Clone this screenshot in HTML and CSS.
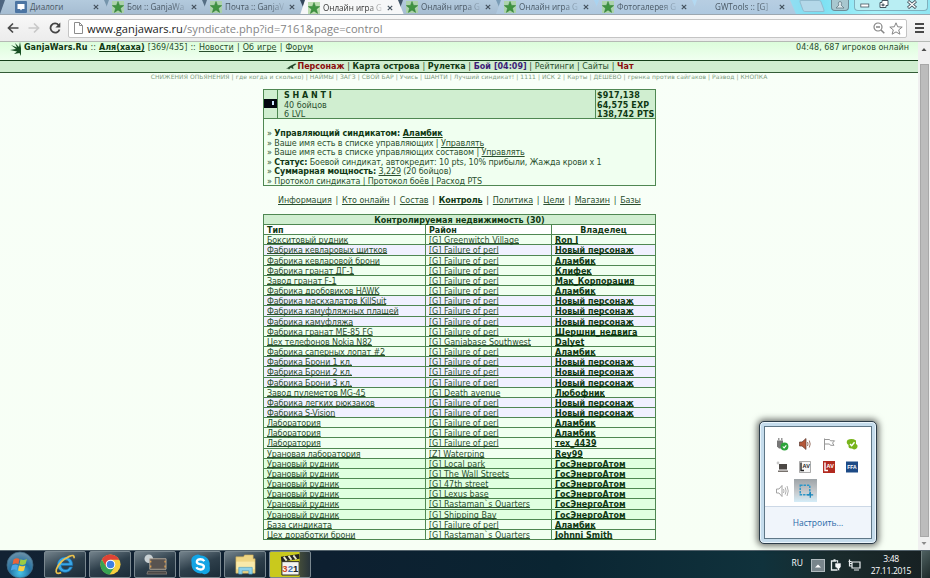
FILE: index.html
```html
<!DOCTYPE html>
<html lang="ru">
<head>
    <meta charset="UTF-8">
    <title>Онлайн игра GanjaWars.Ru</title>
    <link rel="stylesheet" href="styles.css">
</head>
<body>
    <svg class="defs" width="0" height="0">
        <symbol id="star" viewBox="0 0 12 12"><rect width="12" height="12" fill="#a9d59a" opacity=".75"/><path d="M6 .5 7.5 4.4 11.7 4.6 8.4 7.2 9.6 11.4 6 9 2.4 11.4 3.6 7.2 .3 4.6 4.5 4.4Z" fill="#3f9440" stroke="#2e7a35" stroke-width=".5"/></symbol>
        <symbol id="close" viewBox="0 0 6 6"><path d="M.8.8 5.2 5.2M5.2.8.8 5.2" stroke="#46535f" stroke-width="1.2"/></symbol>
    </svg>

    <div class="tabs">
        <div class="tab first"><svg class="fav" viewBox="0 0 12 12"><rect width="12" height="12" rx="1" fill="#4c75a3"/><path d="M2.5 3h7v5H7L6 9.5 5 8H2.5Z" fill="#fff"/></svg><span>Диалоги</span><svg class="x"><use href="#close"/></svg></div>
        <div class="tab"><svg class="fav"><use href="#star"/></svg><span>Бои :: GanjaWa</span><svg class="x"><use href="#close"/></svg></div>
        <div class="tab"><svg class="fav"><use href="#star"/></svg><span>Почта :: GanjaV</span><svg class="x"><use href="#close"/></svg></div>
        <div class="tab active"><svg class="fav"><use href="#star"/></svg><span>Онлайн игра G</span><svg class="x"><use href="#close"/></svg></div>
        <div class="tab"><svg class="fav"><use href="#star"/></svg><span>Онлайн игра G</span><svg class="x"><use href="#close"/></svg></div>
        <div class="tab"><svg class="fav"><use href="#star"/></svg><span>Онлайн игра G</span><svg class="x"><use href="#close"/></svg></div>
        <div class="tab"><svg class="fav"><use href="#star"/></svg><span>Фотогалерея G</span><svg class="x"><use href="#close"/></svg></div>
        <div class="tab"><i class="fav"></i><span>GWTools :: [G]</span><svg class="x"><use href="#close"/></svg></div>
        <div class="newtab"></div>
        <div class="user"><svg width="10" height="8" viewBox="0 0 10 8"><path d="M5 .5a2 2 0 0 1 1 3.5L9 7H1l3-3A2 2 0 0 1 5 .5Z" fill="#dce8ec" stroke="#59707a" stroke-width=".7"/></svg></div>
        <div class="wincontrols">
            <svg width="10" height="9" viewBox="0 0 10 9"><rect x=".8" y="4" width="8" height="3" fill="#fff" stroke="#45545f" stroke-width=".8"/></svg>
            <svg width="10" height="9" viewBox="0 0 10 9"><path d="M3 .5h6v5H7v2H1v-5h2Z" fill="#fff" stroke="#45545f"/><path d="M3 4.2h2v1.5H3Z" fill="none" stroke="#45545f"/></svg>
            <svg class="winclose" width="10" height="9" viewBox="0 0 10 9"><path d="m1 1 8 7M9 1 1 8" stroke="#45545f" stroke-width="3"/><path d="m1.5 1.4 7 6.2M8.5 1.4l-7 6.2" stroke="#fff" stroke-width="1.4"/></svg>
        </div>
    </div>

    <div class="toolbar">
        <svg class="back" width="12" height="12" viewBox="0 0 12 12"><path d="M11.5 6H2M6 1.5 1.5 6 6 10.5" fill="none" stroke="#4a4a4a" stroke-width="1.7"/></svg>
        <svg class="forward" width="12" height="12" viewBox="0 0 12 12"><path d="M.5 6H10M6 1.5 10.5 6 6 10.5" fill="none" stroke="#c9c9c9" stroke-width="1.7"/></svg>
        <svg class="reload" width="12" height="12" viewBox="0 0 12 12"><path d="M9.6 3A4.6 4.6 0 1 0 10.5 7.5" fill="none" stroke="#444" stroke-width="1.8"/><path d="M11.3.4v5H6.4Z" fill="#444"/></svg>
        <div class="address">
            <svg class="page-icon" width="9" height="12" viewBox="0 0 9 12"><path d="M.5.5h5l3 3v8h-8ZM5.5.5v3h3" fill="#fff" stroke="#8c8c8c"/></svg>
            <span class="url"><b>www.ganjawars.ru</b>/syndicate.php?id=7161&amp;page=control</span>
            <svg width="12" height="12" viewBox="0 0 12 12"><circle cx="5" cy="5" r="4" fill="none" stroke="#858585" stroke-width="1.2"/><path d="M3 5h4M8 8l3.3 3.3" stroke="#858585" stroke-width="1.5"/></svg>
            <svg width="14" height="13" viewBox="0 0 14 13"><path d="m7 .8 1.7 4 4.5.3-3.5 2.8 1.2 4.3L7 9.9l-3.9 2.3 1.2-4.3L.8 5.1l4.5-.3Z" fill="#fff" stroke="#858585"/></svg>
        </div>
        <div class="burger"><i></i><i></i><i></i></div>
    </div>

    <div class="view">
        <div class="page">
            <div class="top">
                <svg class="leaf" width="12" height="15" viewBox="0 0 12 15"><path d="M10 0 11 6 11 14 9.5 11 4 12 7 9.5 0 8 6 7 1 3 7 5.5 5 1 9 5Z" fill="#174f22"/></svg>
                <span class="sitename"><b>GanjaWars.Ru</b> :: <b><a>Аля(хаха)</a></b> [369/435] :: <a>Новости</a> | <a>Об игре</a> | <a>Форум</a></span>
                <span class="online">04:48, 687 игроков онлайн</span>
            </div>
            <div class="menu">
                <svg width="11" height="8" viewBox="0 0 11 8"><path d="M0 6 4 3 9 .5 10.5 1 7 3.5 7.5 6 6 5.5 5 4.5 3 6.5 2 5.5Z" fill="#24482a"/></svg>
                <span><b class="red">Персонаж</b> | <b>Карта острова</b> | <b>Рулетка</b> | <b class="violet">Бой [04:09]</b> | Рейтинги | Сайты | <b class="red">Чат</b></span>
            </div>
            <div class="quick"><span>СНИЖЕНИЯ ОПЬЯНЕНИЯ | где когда и сколько) | НАЙМЫ | ЗАГЗ | СВОЙ БАР | Учись | ШАНТИ | Лучший синдикат! | 1111 | ИСК 2 | Карты | ДЕШЕВО | гренка против сайгаков | Развод | КНОПКА</span></div>

            <div class="synd">
                <div class="synd-head">
                    <div class="sign"><i></i></div>
                    <div class="name"><b>S H A N T I</b><br>40 бойцов<br>6 LVL</div>
                    <div class="score">$917,138<br>64,575 EXP<br>138,742 PTS</div>
                </div>
                <div class="synd-info">
                    <div>» <b>Управляющий синдикатом: <a>Аламбик</a></b></div>
                    <div>» Ваше имя есть в списке управляющих | <a>Управлять</a></div>
                    <div>» Ваше имя есть в списке управляющих составом | <a>Управлять</a></div>
                    <div>» <b>Статус:</b> Боевой синдикат, автокредит: 10 pts, 10% прибыли, Жажда крови x 1</div>
                    <div>» <b>Суммарная мощность:</b> <a>3,229</a> (20 бойцов)</div>
                    <div>» Протокол синдиката | Протокол боёв | Расход PTS</div>
                </div>
            </div>

            <div class="sections">
                <a>Информация</a><i>|</i><a>Кто онлайн</a><i>|</i><a>Состав</a><i>|</i><a><b>Контроль</b></a><i>|</i><a>Политика</a><i>|</i><a>Цели</a><i>|</i><a>Магазин</a><i>|</i><a>Базы</a>
            </div>

            <div class="estate">
                <div class="caption">Контролируемая недвижимость (30)</div>
                <div class="row head"><b>Тип</b><b>Район</b><b>Владелец</b></div>
                <div class="row"><a>Бокситовый рудник</a><a>[G] Greenwitch Village</a><a>Ron I</a></div>
                <div class="row own"><a>Фабрика кевларовых щитков</a><a>[G] Failure of perl</a><a>Новый персонаж</a></div>
                <div class="row"><a>Фабрика кевларовой брони</a><a>[G] Failure of perl</a><a>Аламбик</a></div>
                <div class="row"><a>Фабрика гранат ДГ-1</a><a>[G] Failure of perl</a><a>Клифек</a></div>
                <div class="row"><a>Завод гранат F-1</a><a>[G] Failure of perl</a><a>Мак_Корпорация</a></div>
                <div class="row"><a>Фабрика дробовиков HAWK</a><a>[G] Failure of perl</a><a>Аламбик</a></div>
                <div class="row own"><a>Фабрика маскхалатов KillSuit</a><a>[G] Failure of perl</a><a>Новый персонаж</a></div>
                <div class="row own"><a>Фабрика камуфляжных плащей</a><a>[G] Failure of perl</a><a>Новый персонаж</a></div>
                <div class="row own"><a>Фабрика камуфляжа</a><a>[G] Failure of perl</a><a>Новый персонаж</a></div>
                <div class="row"><a>Фабрика гранат МЕ-85 FG</a><a>[G] Failure of perl</a><a>Шершни_недвига</a></div>
                <div class="row"><a>Цех телефонов Nokia N82</a><a>[G] Ganjabase Southwest</a><a>Dalyet</a></div>
                <div class="row"><a>Фабрика саперных лопат #2</a><a>[G] Failure of perl</a><a>Аламбик</a></div>
                <div class="row own"><a>Фабрика Брони 1 кл.</a><a>[G] Failure of perl</a><a>Новый персонаж</a></div>
                <div class="row own"><a>Фабрика Брони 2 кл.</a><a>[G] Failure of perl</a><a>Новый персонаж</a></div>
                <div class="row own"><a>Фабрика Брони 3 кл.</a><a>[G] Failure of perl</a><a>Новый персонаж</a></div>
                <div class="row"><a>Завод пулеметов MG-45</a><a>[G] Death avenue</a><a>Любофник</a></div>
                <div class="row own"><a>Фабрика легких рюкзаков</a><a>[G] Failure of perl</a><a>Новый персонаж</a></div>
                <div class="row own"><a>Фабрика S-Vision</a><a>[G] Failure of perl</a><a>Новый персонаж</a></div>
                <div class="row"><a>Лаборатория</a><a>[G] Failure of perl</a><a>Аламбик</a></div>
                <div class="row"><a>Лаборатория</a><a>[G] Failure of perl</a><a>Аламбик</a></div>
                <div class="row"><a>Лаборатория</a><a>[G] Failure of perl</a><a>тех_4439</a></div>
                <div class="row"><a>Урановая лаборатория</a><a>[Z] Waterping</a><a>Rey99</a></div>
                <div class="row uran"><a>Урановый рудник</a><a>[G] Local park</a><a>ГосЭнергоАтом</a></div>
                <div class="row uran"><a>Урановый рудник</a><a>[G] The Wall Streets</a><a>ГосЭнергоАтом</a></div>
                <div class="row uran"><a>Урановый рудник</a><a>[G] 47th street</a><a>ГосЭнергоАтом</a></div>
                <div class="row uran"><a>Урановый рудник</a><a>[G] Lexus base</a><a>ГосЭнергоАтом</a></div>
                <div class="row uran"><a>Урановый рудник</a><a>[G] Rastaman`s Quarters</a><a>ГосЭнергоАтом</a></div>
                <div class="row uran"><a>Урановый рудник</a><a>[G] Shipping Bay</a><a>ГосЭнергоАтом</a></div>
                <div class="row"><a>База синдиката</a><a>[G] Failure of perl</a><a>Аламбик</a></div>
                <div class="row"><a>Цех доработки брони</a><a>[G] Rastaman`s Quarters</a><a>Johnni Smith</a></div>
            </div>
        </div>
        <div class="scroll">
            <svg width="12" height="14" viewBox="0 0 12 14"><path d="M3.5 9 6 6l2.500 3Z" fill="#4d4d4d"/></svg>
            <div class="thumb"></div>
            <svg width="12" height="12" viewBox="0 0 12 12"><path d="M3.500 5 6 8l2.500-3Z" fill="#8a8a8a"/></svg>
        </div>
    </div>

    <div class="tray">
        <div class="tray-in">
            <div class="tray-icons">
                <svg viewBox="0 0 14 14"><path d="M2 3.500h6v6L6 11.500H4L2 9.500Z" fill="#777"/><path d="M3 1h1.500v2.500H3ZM6 1h1.500v2.500H6Z" fill="#999"/><circle cx="9.500" cy="9.500" r="3.900" fill="#2da43a"/><path d="m7.800 9.500 1.300 1.400 2.200-2.600" fill="none" stroke="#fff" stroke-width="1.100"/></svg>
                <svg viewBox="0 0 14 14"><path d="M1.500 5H4l4-3.500v11L4 9H1.500Z" fill="#b5583a" stroke="#5c3b32" stroke-width=".7"/><path d="M9.500 5q1 2 0 4M11.300 3.500q1.800 3.500 0 7" fill="none" stroke="#9a7466"/></svg>
                <svg viewBox="0 0 14 14"><path d="M2.500 1.500v11.500M3 2.500h4.500l1 1.300h4L10.500 6l1.500 2.300H8.500L7.500 7H3" fill="#fff" stroke="#8b8b8b" stroke-width=".9"/></svg>
                <svg viewBox="0 0 14 14"><path d="M2.500 3Q7 1 11 3.500V7q2.500 1 1 4-2 2.500-5 .5Q3 12 3.500 8 .500 6 2.500 3Z" fill="#79b51c"/><path d="m5 7 1.700 1.800L9.500 5.300" fill="none" stroke="#fff" stroke-width="1.400"/></svg>
                <svg viewBox="0 0 14 14"><path d="M4 4h8v5.500H4Z" fill="#4c4845"/><path d="M3 10.500h10v1.500H3Z" fill="#77716c"/><circle cx="3" cy="3" r="1.400" fill="#c8c8c8"/></svg>
                <svg viewBox="0 0 14 14"><path d="M1.500 1.500h11v11h-11Z" fill="#f7f7f7" stroke="#888" stroke-width=".7"/><path d="M3 2.500v8h3" fill="none" stroke="#222" stroke-width="1.400"/><text x="4.600" y="8" class="lav" fill="#222">AV</text></svg>
                <svg viewBox="0 0 14 14"><path d="M1 1h12v12H1Z" fill="#b22a20"/><path d="M3 2.500v8h3" fill="none" stroke="#fff" stroke-width="1.400"/><text x="4.600" y="8" class="lav" fill="#fff">AV</text></svg>
                <svg viewBox="0 0 14 14"><path d="M1 1.500h12v11H1Z" fill="#1d4a86"/><text x="2.200" y="9" class="ffa">FFA</text></svg>
                <svg viewBox="0 0 14 14"><path d="M1.500 5H4l3-3.500v11L4 9H1.500Z" fill="#fff" stroke="#9a9a9a" stroke-width=".9"/><path d="M8.500 5q1 2 0 4M10.200 3.500q1.800 3.500 0 7M12 2q2.500 5 0 10" fill="none" stroke="#a5a5a5" stroke-width=".9"/></svg>
                <svg class="on" viewBox="0 0 24 24"><path d="M6.500 6.500h10v10h-10Z" fill="none" stroke="#2a96c8" stroke-width="1.500" stroke-dasharray="2.500 1"/><path d="M17 13.500v6M14 16.500h6" stroke="#1784ba" stroke-width="1.300"/></svg>
            </div>
            <div class="tray-foot">Настроить...</div>
        </div>
    </div>

    <div class="taskbar">
        <svg class="start" width="30" height="28" viewBox="0 0 30 28">
            <defs><radialGradient id="orb" cx=".5" cy=".8" r=".8"><stop offset="0" stop-color="#47c5e8"/><stop offset=".5" stop-color="#2372a4"/><stop offset="1" stop-color="#7394a8"/></radialGradient></defs>
            <circle cx="15" cy="14" r="13" fill="url(#orb)" stroke="#3f6a84" stroke-width=".8"/>
            <path d="M8.500 8.500q3-2 6-.5L13.500 13q-3-1-6 .5Z" fill="#e8643a"/><path d="M15.500 8.300q3 1.500 6.500-.3L20.500 13q-3 1.700-6 .2Z" fill="#9ccb45"/>
            <path d="M7 14.500q3-1.700 6-.3L11.800 19q-3-1-6 .5Z" fill="#4fa6e8"/><path d="M14 14.600q3 1.500 6.300-.2L19 19.400q-3 1.700-6 .2Z" fill="#fbcf45"/>
        </svg>
        <div class="task"><svg viewBox="0 0 24 24"><path d="M19.500 13H7.500a4.500 4.500 0 0 0 8.700 1.500h3A8 8 0 1 1 19.500 13ZM7.700 10.500h8.200a4.200 4.200 0 0 0-8.200 0Z" fill="#3aa7e6" stroke="#176ca9" stroke-width=".7"/><path d="M21 5.500Q21.500 1 16 3.500 6 8 2.500 17q-1.500 6 5 3.500" fill="none" stroke="#e9c04d" stroke-width="1.800"/></svg></div>
        <div class="task"><svg viewBox="0 0 24 24"><circle cx="12" cy="12" r="10.500" fill="#f7cf3d"/><path d="M12 12 7.300 14.700 3 6.500A10.500 10.500 0 0 1 21.200 7H12Z" fill="#df4336"/><path d="M2.900 6.700A10.500 10.500 0 0 0 11 22.500L16 15 12 12 7.500 14.500Z" fill="#38a352"/><circle cx="12" cy="12" r="5" fill="#fff"/><circle cx="12" cy="12" r="3.900" fill="#3f7fe0"/></svg></div>
        <div class="task"><svg viewBox="0 0 24 24"><circle cx="5" cy="6" r="4.500" fill="#c9d1d4"/><path d="M6 6h17v11H6Z" fill="#585350" stroke="#b3a899"/><path d="M7 8v2M7 13v2M22 8v2M22 13v2" stroke="#e8a751" stroke-width="1.300"/><path d="M4 19h19l1 3H3Z" fill="#4a4745" stroke="#938b83" stroke-width=".7"/></svg></div>
        <div class="task"><svg viewBox="0 0 24 24"><path d="M7 2Q10 1 12 2.500a9.500 9.500 0 0 1 9.500 11Q23 19 19 21.500q-3 1.300-5.500-.3A9.500 9.500 0 0 1 2.700 10.500Q1 4 7 2Z" fill="#13a5e5"/><path d="M16 8.500Q14.500 6.500 12 6.500c-4.500 0-5 4-1.500 4.900l3 .8c3.500 1.200 2 5-1.500 5q-3 0-4.300-2.300" fill="none" stroke="#fff" stroke-width="2.400"/></svg></div>
        <div class="task"><svg viewBox="0 0 24 24"><path d="M2 4h8l1-2h9v4h2v15H2Z" fill="#efd583" stroke="#c9a95a" stroke-width=".6"/><path d="M2.500 9h19v8h-19Z" fill="#f8e9ab"/><path d="M5 22v-7h14v7h-3.500v-3.500h-7V22Z" fill="#8ed1ea" stroke="#4e9dc0" stroke-width=".7"/></svg></div>
        <div class="task media"><svg viewBox="0 0 24 24"><path d="M2 4 21 1l.5 5L2.500 9Z" fill="#222"/><path d="m5 4 3 4M10 3l3 4M15 2.500l3 4" stroke="#e8e8c8" stroke-width="2"/><path d="M3 9h18v14H3Z" fill="#f3f3ef" stroke="#222"/><text x="3.500" y="20" class="mpc"><tspan fill="#d04a24">3</tspan><tspan fill="#3d6fb5">2</tspan><tspan fill="#222">1</tspan></text></svg></div>
        <div class="space"></div>
        <span class="lang">RU</span>
        <div class="up"><svg width="8" height="6" viewBox="0 0 8 6"><path d="M1 4.500 4 1.500l3 3Z" fill="#fff"/></svg></div>
        <svg class="power" width="12" height="12" viewBox="0 0 12 12"><path d="M1.500 2h6v9h-6ZM3.500.800h2" fill="none" stroke="#e9eef0" stroke-width="1.300"/><path d="M5 4h6v4L9.500 9.500v2h-2v-2L5 8ZM6.500 2v2M9.500 2v2" fill="#f5f7f8" stroke="#223038" stroke-width=".6"/></svg>
        <svg class="net" width="13" height="12" viewBox="0 0 13 12"><path d="M4 3h8v6H4ZM6 11h5M1.500.500v4h2M1.500 4v3h2M.500 2.500h3" fill="none" stroke="#e9eef0" stroke-width="1.200"/></svg>
        <div class="clock">3:48<br>27.11.2015</div>
        <div class="desk"></div>
    </div>
</body>
</html>
```
FILE: styles.css
```css
* {
    box-sizing: border-box;
}
body {
    margin: 0;
    width: 930px;
    height: 578px;
    overflow: hidden;
    font-family: "DejaVu Sans", Verdana, sans-serif;
    font-size: 8px;
    color: #2a4f2e;
}
svg {
    display: block;
    flex: none;
}
i {
    font-style: normal;
}
.defs {
    position: absolute;
}

/* Вкладки */
.tabs {
    display: flex;
    height: 15px;
    padding-left: 6px;
    overflow: hidden;
    background: linear-gradient(90deg, #4d6580, #7797ae 12%, #33465a 32%, #41566a 45%, #a5d1f0 60%, #b9dcf2 80%, #7adff2 88%, #a6f2fa 94%, #90e5f2);
    border-bottom: 1px solid #9ba7b0;
    font-family: "Open Sans", sans-serif;
    font-size: 8.1px;
    color: #4a5864;
}
.tab {
    display: flex;
    flex: none;
    width: 104px;
    height: 14px;
    margin-right: -6px;
    padding: 0 11px 0 8px;
    align-items: center;
    background: linear-gradient(#b3cadd, #a6bdd2);
    clip-path: polygon(0 100%, 5px 0, 98px 0, 104px 100%);
}
.tab.first {
    width: 110px;
    margin-left: -6px;
    padding-left: 15px;
    clip-path: polygon(0 100%, 5px 0, 104px 0, 110px 100%);
}
.tab.active {
    height: 15px;
    background: #f6f7f8;
    color: #333;
    z-index: 1;
}
.tab:nth-child(n+6) {
    background: linear-gradient(#b7cee2, #aec8df);
}
.tab span {
    flex: 1;
    margin: 0 1px 0 3px;
    white-space: nowrap;
    line-height: 14px;
    mask-image: linear-gradient(90deg, #000 70%, transparent 98%);
}
.tab.first span {
    mask-image: none;
}
.fav {
    flex: none;
    width: 12px;
    height: 12px;
}
.x {
    width: 6px;
    height: 6px;
}
.newtab {
    width: 22px;
    height: 12px;
    margin-left: 11px;
    background: #b4d8e9;
    border: 1px solid #93bacd;
    border-radius: 2px;
    transform: skewX(20deg);
}
.user {
    width: 18px;
    height: 11px;
    margin-left: 8px;
    padding: 1px 3px;
    border: 1px solid #6d8b96;
    border-top: 0;
    border-radius: 0 0 4px 4px;
    background: #a8c7cf;
}
.wincontrols {
    display: flex;
    width: 74px;
    height: 11px;
    margin-left: 5px;
    padding-left: 5px;
    gap: 9px;
    border: 1px solid #7fb0bd;
    border-top: 0;
    border-radius: 0 0 4px 4px;
    background: #b9eef3;
}
.winclose {
    margin-left: 9px;
}

/* Адресная строка */
.toolbar {
    display: flex;
    align-items: center;
    height: 27px;
    padding: 0 6px 0 7px;
    background: linear-gradient(#f8f8f8, #ececec);
    border-bottom: 1px solid #b5b9b5;
}
.forward {
    margin-left: 9px;
}
.reload {
    margin-left: 9px;
}
.address {
    display: flex;
    align-items: center;
    width: 839px;
    height: 19px;
    margin-left: 7px;
    padding: 0 3px 0 5px;
    background: #fff;
    border: 1px solid #c4c4c4;
    border-radius: 2px;
    gap: 4px;
}
.url {
    flex: 1;
    font: 11.15px "Open Sans", sans-serif;
    color: #858585;
    white-space: nowrap;
}
.url b {
    font-weight: normal;
    color: #222;
}
.burger {
    display: flex;
    flex-direction: column;
    gap: 2px;
    width: 9px;
    margin-left: 8px;
}
.burger i {
    height: 2px;
    background: #484848;
}

/* Страница */
.view {
    display: flex;
    height: 508px;
}
.page {
    flex: 1;
    background: linear-gradient(#f8fff8, #f7fff5);
}
.page a {
    text-decoration: underline;
    text-decoration-skip-ink: none;
}
.page b {
    color: #0f3813;
}
.top {
    display: flex;
    height: 18px;
    padding: 0 9px 0 10px;
    background: linear-gradient(#dcfddb, #f0fff0);
    line-height: 11px;
    white-space: nowrap;
}
.sitename {
    margin-left: 2px;
    word-spacing: .6px;
}
.online {
    margin-left: auto;
}
.menu {
    display: flex;
    justify-content: center;
    align-items: center;
    height: 13px;
    padding-left: 2px;
    background: #d0eed0;
    border-top: 1px solid #16401a;
    border-bottom: 1px solid #335c36;
    white-space: nowrap;
    word-spacing: .15px;
}
.page .red {
    color: #8b0c0c;
}
.page .violet {
    color: #3d1d78;
}
.quick {
    height: 16px;
    text-align: center;
    font-size: 6px;
    line-height: 8px;
    letter-spacing: .08px;
    color: #7d9c80;
    white-space: nowrap;
}
.synd {
    width: 393px;
    height: 97px;
    margin-left: 263px;
    border: 1px solid #4f8752;
    background: #f0fff0;
    line-height: 9.5px;
    white-space: nowrap;
}
.synd-head {
    display: flex;
    height: 29px;
    background: #d0eed0;
    border-bottom: 1px solid #4f8752;
    line-height: 9.6px;
}
.sign {
    width: 14px;
    padding-top: 9px;
    border-right: 1px solid #4f8752;
}
.sign i {
    display: block;
    width: 13px;
    height: 9px;
    background: linear-gradient(#cde6ff, #cde6ff) 8px 2px / 2px 4px no-repeat #03060f;
}
.name {
    flex: 1;
    padding: 1px 0 0 6px;
}
.score {
    width: 60px;
    padding: 1px 0 0 1px;
    font-weight: bold;
    letter-spacing: .1px;
    color: #0f3813;
    border-left: 1px solid #4f8752;
}
.synd-info {
    padding: 10px 0 0 3px;
    letter-spacing: -.1px;
}
.sections {
    display: flex;
    width: 363px;
    height: 28px;
    margin-left: 278px;
    line-height: 29px;
    letter-spacing: -.08px;
    justify-content: space-between;
    white-space: nowrap;
}
.estate {
    width: 393px;
    margin-left: 263px;
    border: 1px solid #4f8752;
    border-bottom: 0;
    background: #f0fff0;
    white-space: nowrap;
}
.caption {
    height: 10.17px;
    line-height: 11.4px;
    text-align: center;
    font-weight: bold;
    color: #0f3813;
    background: #d0eed0;
    border-bottom: 1px solid #4f8752;
}
.row {
    display: grid;
    grid-template-columns: 162px 126px 103px;
    grid-template-rows: 100%;
    height: 10.17px;
    line-height: 11.2px;
    border-bottom: 1px solid #4f8752;
}
/* линия под ссылкой не должна сливаться с рамкой строки */
.row a {
    text-underline-offset: 0;
    text-decoration-thickness: 1px;
}
.row > * {
    padding-left: 3px;
    border-right: 1px solid #4f8752;
}
.row > a:first-child {
    letter-spacing: -.15px;
}
.row > :last-child {
    font-weight: bold;
    color: #0f3813;
    border-right: 0;
}
.head {
    background: #fff;
}
.head > :last-child {
    padding: 0;
    text-align: center;
}
.own {
    background: #f0f0ff;
}
.uran {
    background: #e0ffe0;
}

.scroll {
    width: 12px;
    background: #f0f0f0;
}
.thumb {
    height: 473px;
    margin: 8px 1px 0 2px;
    background: #bcbcbc;
    border: 1px solid #a8a8a8;
}

/* Скрытые значки */
.tray {
    position: absolute;
    left: 759px;
    top: 421px;
    width: 118px;
    height: 123px;
    padding: 4px;
    background: #c5dcec;
    border: 1px solid #2c3c49;
    border-radius: 5px;
    box-shadow: 0 0 6px 2px rgba(0, 0, 0, .55), inset 0 0 0 1px #eaf5fc;
}
.tray-in {
    display: flex;
    flex-direction: column;
    height: 113px;
    background: #fff;
    border: 1px solid #5f7787;
}
.tray-icons {
    display: grid;
    flex: 1;
    grid-template-columns: repeat(4, 23.5px);
    grid-template-rows: repeat(3, 23.5px);
    padding: 5px 0 0 5px;
    place-items: center;
}
.tray-icons svg {
    width: 14px;
    height: 14px;
}
.tray-icons .on {
    width: 23px;
    height: 23px;
    background: linear-gradient(#9da3a7, #c9cdd0 60%, #d4edf8);
}
.tray-foot {
    height: 32px;
    background: #f0f5fb;
    border-top: 1px solid #ccd8e6;
    text-align: center;
    font: 8.5px/31px "Open Sans", sans-serif;
    color: #2768a8;
}
.lav {
    font: bold 5.5px "Liberation Sans", sans-serif;
}
.ffa {
    font: bold 5px "Liberation Sans", sans-serif;
    fill: #fff;
}

/* Панель задач */
.taskbar {
    display: flex;
    height: 28px;
    background: linear-gradient(90deg, #122233, #0d1f30 35%, #0a2532 60%, #10323c 82%, #1a2b2c 90%, #172022);
    border-top: 1px solid #54636c;
    color: #fff;
    font-family: "Open Sans", sans-serif;
    font-size: 8.5px;
}
.start {
    margin: 0 9px 0 5px;
}
.task {
    display: flex;
    width: 42px;
    height: 27px;
    margin-right: 3px;
    justify-content: center;
    align-items: center;
    border: 1px solid #7a8890;
    border-radius: 2px;
    background: linear-gradient(160deg, #74838c, #2e3f4b 50%, #1b2c38);
}
.task svg {
    width: 23px;
    height: 23px;
}
.media {
    background: linear-gradient(90deg, #c9c91d 73%, #414a3a 75%, #28343b);
}
.mpc {
    font: bold 10px "Liberation Sans", sans-serif;
}
.space {
    flex: 1;
}
.lang {
    line-height: 24px;
}
.up {
    display: flex;
    width: 14px;
    height: 13px;
    margin: 8px 5px 0 8px;
    align-items: center;
    justify-content: center;
    background: #78858b;
    border: 1px solid #b0babe;
}
.power {
    margin: 8px 6px 0 0;
}
.net {
    margin-top: 8px;
}
.clock {
    width: 60px;
    padding-top: 2px;
    text-align: center;
    line-height: 12px;
    font-size: 8.5px;
    letter-spacing: -.3px;
}
.desk {
    width: 9px;
    border-left: 1px solid #718080;
    background: linear-gradient(135deg, #4e6060, #1d2929);
}
```
